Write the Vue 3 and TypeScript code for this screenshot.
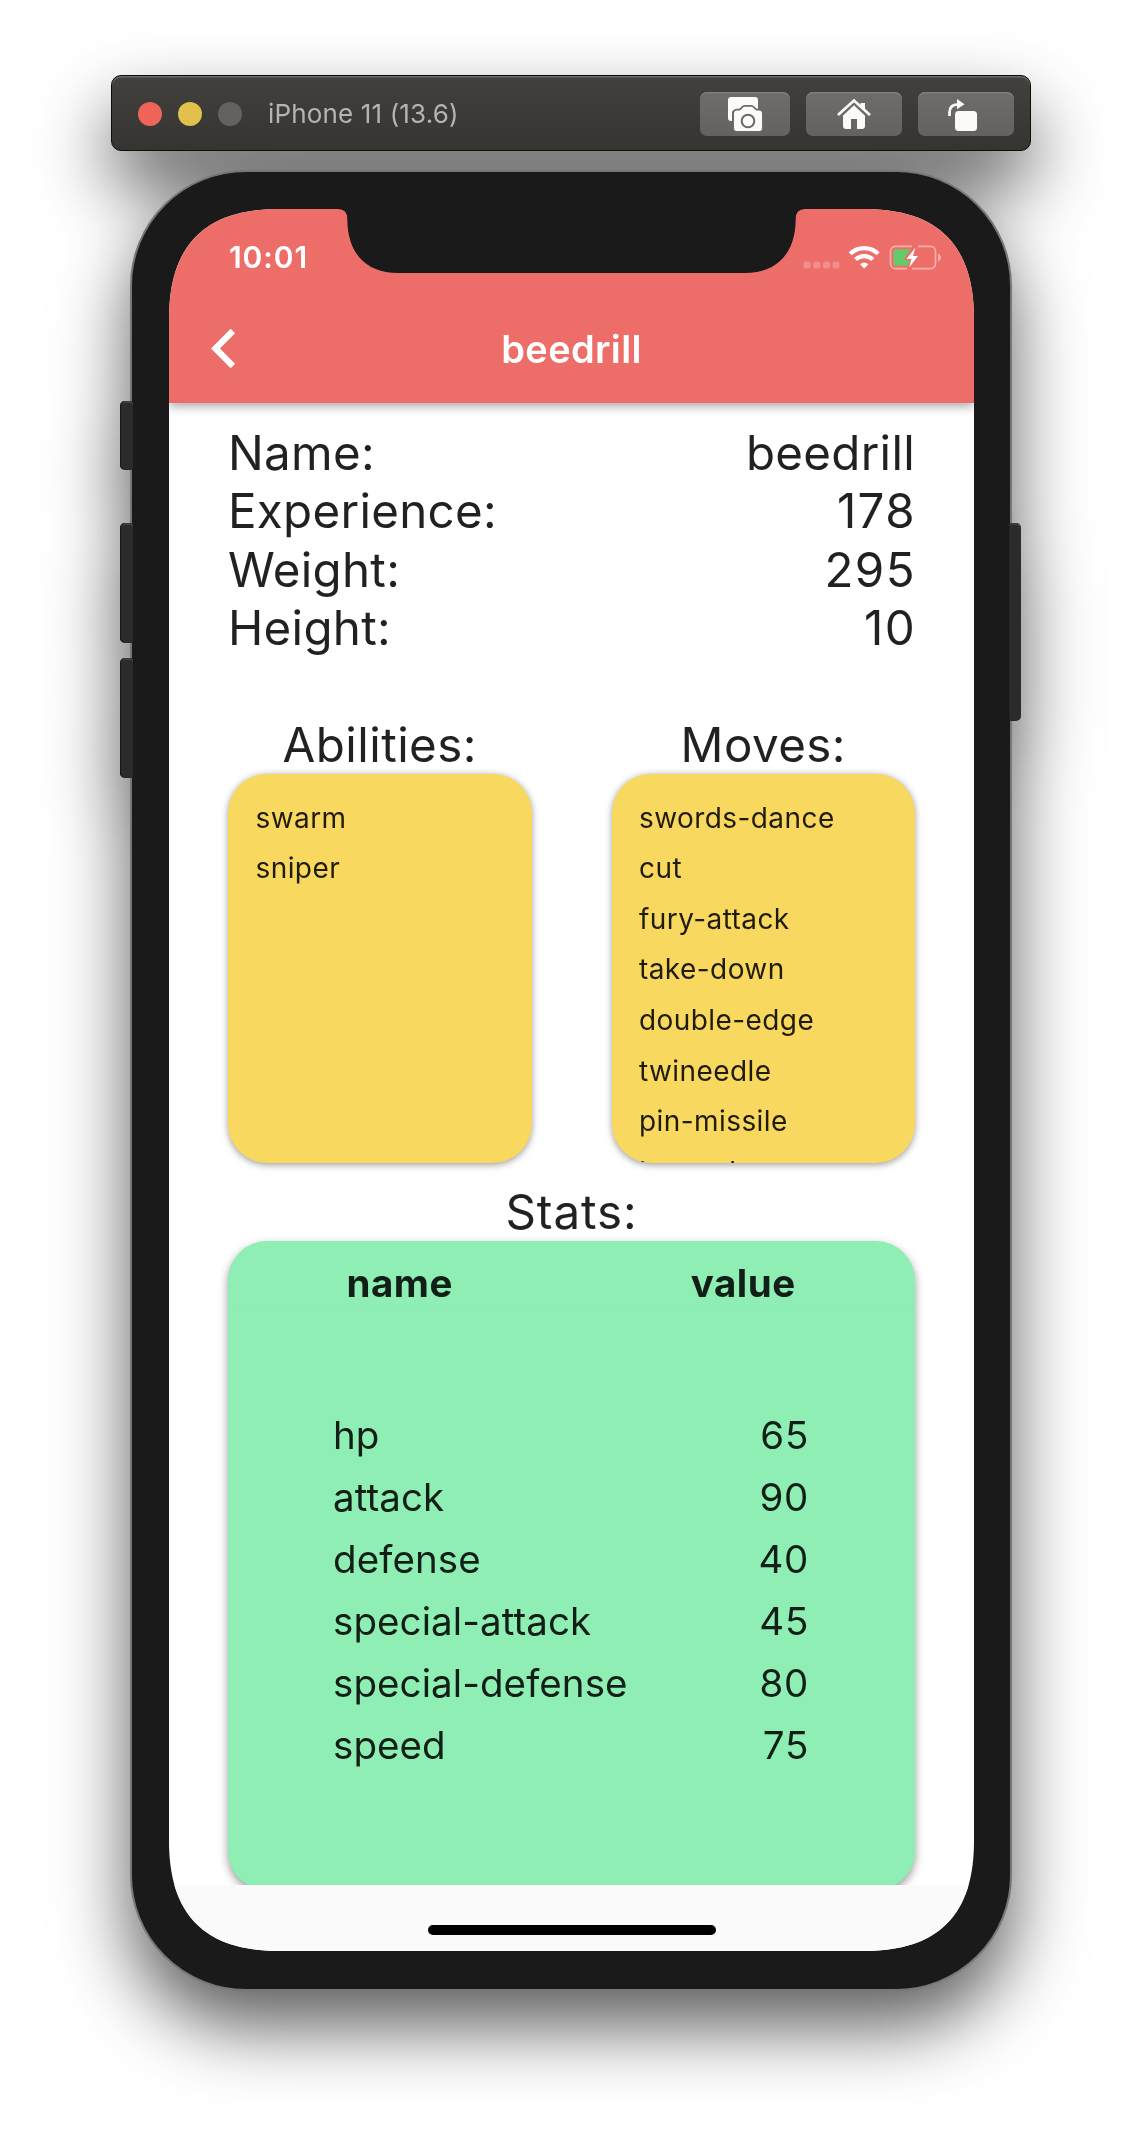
<script setup lang="ts">
interface Pair {
  label: string
  value: string
}

const facts: Pair[] = [
  { label: 'Name:', value: 'beedrill' },
  { label: 'Experience:', value: '178' },
  { label: 'Weight:', value: '295' },
  { label: 'Height:', value: '10' },
]

const lists: { title: string; items: string[] }[] = [
  { title: 'Abilities:', items: ['swarm', 'sniper'] },
  {
    title: 'Moves:',
    items: [
      'swords-dance',
      'cut',
      'fury-attack',
      'take-down',
      'double-edge',
      'twineedle',
      'pin-missile',
      'hyper-beam',
    ],
  },
]

const stats: Pair[] = [
  { label: 'hp', value: '65' },
  { label: 'attack', value: '90' },
  { label: 'defense', value: '40' },
  { label: 'special-attack', value: '45' },
  { label: 'special-defense', value: '80' },
  { label: 'speed', value: '75' },
]

const isNumeric = (text: string): boolean => /^\d+$/.test(text)
</script>

<template>
  <main class="desktop">
    <div class="simulator">
      <header class="toolbar">
        <div class="lights">
          <span class="light close"></span>
          <span class="light minimise"></span>
          <span class="light zoom"></span>
        </div>
        <span class="device-name">iPhone 11 (13.6)</span>
        <div class="tools">
          <button class="tool tool-shot" aria-label="Screenshot">
            <svg width="90" height="44" viewBox="0 0 90 44">
              <path d="M31 5H55a3 3 0 0 1 3 3V20H45L34 18a3 3 0 0 0-2 3V29H31a3 3 0 0 1-3-3V8a3 3 0 0 1 3-3z" fill="#fbfaf9" />
              <path d="M37 18.500h3l2.500-2.500q1-1.200 2.500-1.200h6q1.500 0 2.500 1.200L56 18.500h3a3 3 0 0 1 3 3V36a3 3 0 0 1-3 3H37a3 3 0 0 1-3-3V21.500a3 3 0 0 1 3-3z" fill="#fbfaf9" stroke="#6b6a68" stroke-width="3.500" paint-order="stroke" />
              <circle cx="48" cy="29" r="6.300" fill="none" stroke="#6b6a68" stroke-width="2" />
            </svg>
          </button>
          <button class="tool" aria-label="Home">
            <svg width="96" height="44" viewBox="0 0 96 44">
              <path d="M37 23L48 12l11 11v11a3 3 0 0 1-3 3h-5V27h-6v10h-5a3 3 0 0 1-3-3z" fill="#fbfaf9" />
              <path d="M31.500 23.500L48 8l16.500 15.500" fill="none" stroke="#6b6a68" stroke-width="5.500" transform="translate(0 1.500)" />
              <path d="M54.500 11h4.500v7l-4.500-4.500z" fill="#fbfaf9" />
              <path d="M32 23L48 8.500 64 23" fill="none" stroke="#fbfaf9" stroke-width="2.700" />
            </svg>
          </button>
          <button class="tool" aria-label="Rotate">
            <svg width="96" height="44" viewBox="0 0 96 44">
              <rect x="37" y="19" width="22" height="20" rx="3.500" fill="#fbfaf9" />
              <path d="M31.500 24V20.500Q31.500 12.500 40 12.300" fill="none" stroke="#fbfaf9" stroke-width="2.800" />
              <path d="M39 7l7.500 5.200L39 17.200z" fill="#fbfaf9" />
            </svg>
          </button>
        </div>
      </header>

      <section class="phone">
        <span class="key key-mute"></span>
        <span class="key key-up"></span>
        <span class="key key-down"></span>
        <span class="key key-power"></span>

        <div class="screen">
          <svg class="notch" width="467" height="64" viewBox="0 0 467 64">
            <path d="M0 0q9.300 0 9.300 10C9.300 42 26 64 60 64H407C441 64 457.700 42 457.700 10Q457.700 0 467 0z" fill="#1a1a1a" />
          </svg>

          <div class="app-bar">
            <div class="status">
              <span class="clock">10:01</span>
              <svg class="status-icons" width="139" height="26" viewBox="0 0 139 26">
                <g fill="#fff" fill-opacity=".22">
                  <rect x="0.500" y="16.500" width="7" height="7" rx="2" />
                  <rect x="10.200" y="16.500" width="7" height="7" rx="2" />
                  <rect x="19.900" y="16.500" width="7" height="7" rx="2" />
                  <rect x="29.500" y="16.500" width="7" height="7" rx="2" />
                </g>
                <g fill="none" stroke="#fff" stroke-width="4.200">
                  <path d="M47.200 8.800a20 20 0 0 1 28 0" />
                  <path d="M52.600 14.600a12.300 12.300 0 0 1 17.200 0" />
                </g>
                <path d="M57 19.300q4.200-3.600 8.400 0L61.200 23.500z" fill="#fff" />
                <path d="M109 1.300H92.500a5 5 0 0 0-5 5v12.400a5 5 0 0 0 5 5H104M115 1.300h12.500a5 5 0 0 1 5 5v12.400a5 5 0 0 1-5 5H109" fill="none" stroke="#fff" stroke-opacity=".45" stroke-width="1.700" />
                <path d="M135 8.800q3 1 3 3.800t-3 3.800z" fill="#fff" fill-opacity=".45" />
                <path d="M92.500 4.300H107.500L100.800 15h6l-2 5.800H92.500a2 2 0 0 1-2-2V6.300a2 2 0 0 1 2-2z" fill="#65cb6a" />
                <path d="M112.300 2.800L103.500 14h5l-2.300 8.500L115 11h-5z" fill="#fff" />
              </svg>
            </div>
            <div class="nav">
              <svg class="back" width="47" height="47" viewBox="0 0 24 24">
                <path d="M12.300 4.200L10.050 1.950 0 12l10.050 10.050 2.250-2.250L4.550 12z" fill="#fff" />
              </svg>
              <h1 class="nav-title">beedrill</h1>
            </div>
          </div>

          <div class="content">
            <dl class="facts">
              <div v-for="fact in facts" :key="fact.label" class="fact">
                <dt>{{ fact.label }}</dt>
                <dd :class="{ numeric: isNumeric(fact.value) }">{{ fact.value }}</dd>
              </div>
            </dl>

            <div class="lists">
              <div v-for="list in lists" :key="list.title" class="list">
                <h2 class="heading">{{ list.title }}</h2>
                <ul class="card">
                  <li v-for="item in list.items" :key="item">{{ item }}</li>
                </ul>
              </div>
            </div>

            <h2 class="heading stats-heading">Stats:</h2>
            <div class="stats">
              <div class="stats-head">
                <span>name</span>
                <span>value</span>
              </div>
              <div class="stats-body">
                <div v-for="stat in stats" :key="stat.label" class="stat">
                  <span>{{ stat.label }}</span>
                  <span class="stat-value">{{ stat.value }}</span>
                </div>
              </div>
            </div>
          </div>

          <footer class="home-area">
            <span class="home-indicator"></span>
          </footer>
        </div>
      </section>
    </div>
  </main>
</template>

<style>
body {
  margin: 0;
  background: #fff;
}
</style>

<style scoped>
.desktop {
  box-sizing: border-box;
  width: 1142px;
  height: 2138px;
  padding: 75px 111px 0;
  overflow: hidden;
  font-family: Inter, "Liberation Sans", sans-serif;
  color: rgba(0, 0, 0, 0.87);
}

.simulator {
  width: 920px;
  filter: drop-shadow(0 36px 36px rgba(0, 0, 0, 0.63));
}

.toolbar {
  box-sizing: border-box;
  display: flex;
  align-items: center;
  width: 920px;
  height: 76px;
  padding: 1px 16px 0 27px;
  border: 1px solid #0c0c0b;
  border-radius: 10px;
  background: linear-gradient(#42413e, #353431);
  box-shadow: inset 0 1.500px 0 #6b6a67;
}

.lights {
  display: flex;
  gap: 16px;
  margin-left: -1px;
}

.light {
  width: 24px;
  height: 24px;
  border-radius: 50%;
}

.close {
  background: #ee6459;
}

.minimise {
  background: #e1c04c;
}

.zoom {
  background: #636260;
}

.device-name {
  padding-top: 1px;
  margin-left: 26px;
  font-size: 26px;
  letter-spacing: 0.150px;
  line-height: 30px;
  color: #b5b4b2;
}

.tools {
  display: flex;
  gap: 16px;
  margin-left: auto;
}

.tool {
  display: block;
  width: 96px;
  height: 44px;
  padding: 0;
  border: 0;
  border-radius: 7px;
  background: linear-gradient(#6e6d6b, #636260);
  box-shadow: inset 0 1.500px 0 #7f7e7c;
}

.tool-shot {
  width: 90px;
}

.tool svg {
  display: block;
}

.phone {
  position: relative;
  box-sizing: border-box;
  width: 882px;
  height: 1821px;
  margin: 18.500px 0 0 19px;
  padding: 37.500px 36px 37px 37px;
  border: 2px solid #777;
  border-radius: 116px;
  background: #1a1a1a;
}

.key {
  position: absolute;
  left: -12px;
  width: 13px;
  border-radius: 5px 3px 3px 5px;
  background: #2b2b2b;
  box-shadow: inset 1px 0 1px #161616, inset 0 2px 1px #444;
}

.key-mute {
  top: 229px;
  height: 69px;
}

.key-up {
  top: 351px;
  height: 120px;
}

.key-down {
  top: 486px;
  height: 120px;
}

.key-power {
  left: auto;
  right: -11px;
  top: 351px;
  height: 198px;
  border-radius: 3px 5px 5px 3px;
}

.screen {
  position: relative;
  display: flex;
  flex-direction: column;
  width: 805px;
  height: 1742px;
  background: #fff;
  clip-path: path("M0 110C0 36 36 0 110 0H695C769 0 805 36 805 110V1632C805 1706 769 1742 695 1742H110C36 1742 0 1706 0 1632Z");
}

.notch {
  position: absolute;
  top: 0;
  left: 169px;
  z-index: 3;
}

.app-bar {
  position: relative;
  z-index: 2;
  flex: none;
  height: 194px;
  background: #ed6e69;
  box-shadow: 0 3px 10px rgba(0, 0, 0, 0.36);
}

.status {
  display: flex;
  justify-content: space-between;
  height: 86px;
  padding: 0 32px 0 60px;
}

.clock {
  padding-top: 30px;
  font-size: 30px;
  font-weight: 600;
  letter-spacing: 0.900px;
  line-height: 36px;
  color: #fff;
}

.status-icons {
  margin-top: 36px;
}

.nav {
  display: flex;
  align-items: center;
  height: 107px;
  padding: 0 43px 0 42px;
}

.back {
  flex: none;
}

.nav-title {
  flex: 1;
  margin: 0 46px 0 0;
  text-align: center;
  font-size: 38px;
  font-weight: 600;
  letter-spacing: 0.350px;
  color: #fff;
}

.content {
  flex: none;
  box-sizing: border-box;
  height: 1482px;
  padding: 21px 59px 0;
  overflow: hidden;
}

.facts {
  margin: 0;
}

.fact {
  display: flex;
  justify-content: space-between;
  height: 58.400px;
  font-size: 47.500px;
  letter-spacing: 0.300px;
  line-height: 58.400px;
}

.fact dd {
  margin: 0;
}

.fact .numeric {
  margin-right: -1px;
  letter-spacing: 1.400px;
}

.lists {
  display: flex;
  justify-content: space-between;
  margin-top: 58px;
}

.list {
  width: 303.500px;
}

.heading {
  height: 58px;
  margin: 0;
  text-align: center;
  font-size: 47.500px;
  font-weight: 400;
  letter-spacing: 0.450px;
  line-height: 58px;
}

.card {
  box-sizing: border-box;
  height: 389px;
  margin: 0;
  padding: 19px 27.500px 0;
  overflow: hidden;
  list-style: none;
  border-radius: 39px;
  background: #f8d85e;
  box-shadow: 0 1.500px 7px rgba(0, 0, 0, 0.38);
  font-size: 28px;
  letter-spacing: 0.420px;
  line-height: 50.600px;
}

.card li {
  height: 50.600px;
}

.stats-heading {
  margin-top: 20px;
  letter-spacing: 0.900px;
}

.stats {
  height: 649px;
  border-radius: 39px;
  background: #8eeeb4;
  box-shadow: 0 4px 10px rgba(0, 0, 0, 0.4);
}

.stats-head {
  display: grid;
  grid-template-columns: 1fr 1fr;
  height: 66px;
  padding-top: 18px;
  box-sizing: border-box;
  border-bottom: 1px solid #8cebb2;
  font-size: 38.500px;
  font-weight: 700;
  letter-spacing: 0.500px;
  line-height: 49px;
  text-align: center;
}

.stats-body {
  padding: 97px 106px 0 105px;
}

.stat {
  display: flex;
  justify-content: space-between;
  height: 62.100px;
  font-size: 38.500px;
  letter-spacing: 0.080px;
  line-height: 62.100px;
}

.stat-value {
  letter-spacing: 0.700px;
}

.home-area {
  display: flex;
  flex: 1;
  justify-content: center;
  background: #fafafa;
}

.home-indicator {
  width: 288px;
  height: 10px;
  margin-top: 40px;
  border-radius: 5px;
  background: #000;
}
</style>
